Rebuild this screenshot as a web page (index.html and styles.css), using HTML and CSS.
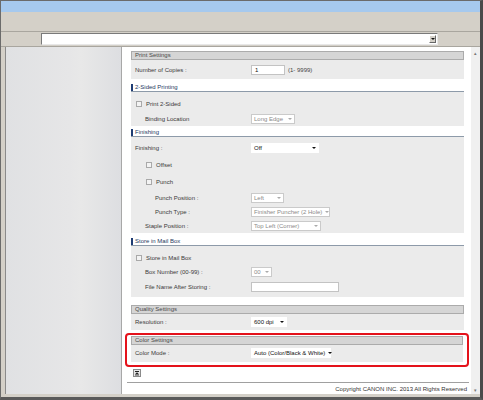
FILE: index.html
```html
<!DOCTYPE html>
<html>
<head>
<meta charset="utf-8">
<link rel="stylesheet" href="styles.css">
</head>
<body>
<div class="window">
  <div class="titlebar"></div>
  <div class="toolbar"></div>
  <div class="addressrow">
    <div class="address"><span class="addr-btn"><span class="tri-dark"></span></span></div>
  </div>
  <div class="main">
    <div class="sidebar"></div>
    <div class="content">
      <div class="sec">
        <div class="hbox">Print Settings</div>
        <div class="body b-print">
          <div class="row h15"><div class="lbl">Number of Copies :</div><div class="input w34">1</div><span class="hint">(1- 9999)</span></div>
        </div>
      </div>

      <div class="sec m5">
        <div class="hbar">2-Sided Printing</div>
        <div class="body b-duplex">
          <div class="row h15"><div class="lbl"><span class="cb"></span>Print 2-Sided</div></div>
          <div class="row h15"><div class="lbl i2">Binding Location</div><div class="sel dis w44">Long Edge<span class="tri"></span></div></div>
        </div>
      </div>

      <div class="sec m3">
        <div class="hbar">Finishing</div>
        <div class="body b-fin">
          <div class="row h16"><div class="lbl">Finishing :</div><div class="sel en w68">Off<span class="tri-dark"></span></div></div>
          <div class="row h17"><div class="lbl i2"><span class="cb"></span>Offset</div></div>
          <div class="row h17"><div class="lbl i2"><span class="cb"></span>Punch</div></div>
          <div class="row h15"><div class="lbl i3">Punch Position :</div><div class="sel dis w33">Left<span class="tri"></span></div></div>
          <div class="row h14"><div class="lbl i3">Punch Type :</div><div class="sel dis w79">Finisher Puncher (2 Hole)<span class="tri"></span></div></div>
          <div class="row h14"><div class="lbl i2">Staple Position :</div><div class="sel dis w70">Top Left (Corner)<span class="tri"></span></div></div>
        </div>
      </div>

      <div class="sec m5">
        <div class="hbar">Store in Mail Box</div>
        <div class="body b-mail">
          <div class="row h14"><div class="lbl"><span class="cb"></span>Store in Mail Box</div></div>
          <div class="row h14"><div class="lbl i2">Box Number (00-99) :</div><div class="sel dis w21">00<span class="tri"></span></div></div>
          <div class="row h15"><div class="lbl i2">File Name After Storing :</div><div class="input w87"></div></div>
        </div>
      </div>

      <div class="sec m8">
        <div class="hbox">Quality Settings</div>
        <div class="body b-q">
          <div class="row h15"><div class="lbl">Resolution :</div><div class="sel en w36">600 dpi<span class="tri-dark"></span></div></div>
        </div>
      </div>

      <div class="highlight">
        <div class="hbox">Color Settings</div>
        <div class="body b-c">
          <div class="row h16"><div class="lbl">Color Mode :</div><div class="sel en w80">Auto (Color/Black &amp; White)<span class="tri-dark"></span></div></div>
        </div>
      </div>

      <div class="toprow">
        <span class="topbtn">
          <svg width="8" height="8" viewBox="0 0 8 8">
            <rect x="0.5" y="0.5" width="7" height="7" fill="#e6e6e6" stroke="#8a8a8a"/>
            <rect x="2" y="2" width="4" height="1" fill="#222"/>
            <polygon points="4,3.3 6,5.3 2,5.3" fill="#222"/>
            <rect x="2" y="5.6" width="4" height="0.8" fill="#222"/>
          </svg>
        </span>
      </div>

      <div class="footer">Copyright CANON INC. 2013 All Rights Reserved</div>
    </div>
    <div class="scrollbar"><span class="sarrow">&#9652;</span><span class="sarrow">&#9662;</span></div>
  </div>
</div>
</body>
</html>
```

FILE: styles.css
```css
* { box-sizing: border-box; }
html, body { margin: 0; padding: 0; }
body {
  width: 483px;
  height: 400px;
  overflow: hidden;
  font-family: "Liberation Sans", Arial, sans-serif;
  font-size: 6px;
  color: #3a3a3a;
  background: #d4d0c8;
}
.window {
  width: 483px;
  height: 400px;
  border: 1px solid #6b6b6b;
  border-right: 3px solid #4a4a4a;
  border-bottom: 3px solid #5a5a5a;
  display: flex;
  flex-direction: column;
  background: #d4d0c8;
}
.titlebar { height: 11px; background: #a6c9ee; flex: none; }
.toolbar {
  height: 20px;
  flex: none;
  background: #d4d0c8;
  border-bottom: 1px solid #a9a69f;
}
.addressrow {
  height: 15px;
  flex: none;
  padding: 1px 0 0 40px;
  border-bottom: 1px solid #a9a69f;
}
.address {
  width: 397px;
  height: 12px;
  background: #fff;
  border: 1px solid #7a7a7a;
  border-right-color: #e8e8e8;
  border-bottom-color: #e8e8e8;
  display: flex;
  justify-content: flex-end;
  padding: 1px;
}
.addr-btn {
  width: 7px;
  height: 8px;
  background: #d4d0c8;
  border: 1px solid #fff;
  border-right-color: #666;
  border-bottom-color: #666;
  display: flex;
  align-items: center;
  justify-content: center;
}
.main {
  flex: 1;
  display: flex;
  padding: 0 0 3px 4px;
  min-height: 0;
}
.sidebar {
  width: 117px;
  flex: none;
  border-left: 1px solid #8a8a8a;
  border-right: 1px solid #a8a8a8;
  background: linear-gradient(to right, #e0e1e3 0%, #e6e6e7 55%, #e8e8e8 65%, #dddee1 100%);
}
.content {
  flex: 1;
  background: #fff;
  display: flex;
  flex-direction: column;
  padding: 4px 7px 0 9px;
  min-width: 0;
}
.scrollbar {
  width: 9px;
  flex: none;
  background: #f0f0f0;
  display: flex;
  flex-direction: column;
  justify-content: space-between;
  align-items: center;
  padding: 3px 0 1px;
  color: #777;
  font-size: 5px;
  line-height: 6px;
}
.sec { flex: none; }
.m3 { margin-top: 3px; }
.m5 { margin-top: 5px; }
.m8 { margin-top: 8px; }
.hbox {
  height: 9px;
  line-height: 7px;
  background: #d5d5d5;
  border: 1px solid #ababab;
  padding-left: 3px;
  color: #4a4a4a;
}
.hbar {
  height: 8px;
  line-height: 7px;
  border-bottom: 1px solid #8d9aa9;
  padding-left: 2px;
  color: #253a5e;
}
.hbar::before {
  content: "";
  display: inline-block;
  width: 2px;
  height: 7px;
  background: #1e3c74;
  vertical-align: top;
  margin: 0 2px 0 -2px;
}
.body { background: #ebebeb; }
.b-print { padding: 2px 0 2px; }
.b-duplex { padding: 4px 0 0; }
.b-fin { padding: 3px 0 0; }
.b-mail { padding: 5px 0 3px; }
.b-q { padding: 0 0 1px; }
.b-c { padding: 0 0 1px; }
.row { display: flex; align-items: center; }
.h14 { height: 14px; }
.h15 { height: 15px; }
.h16 { height: 16px; }
.h17 { height: 17px; }
.lbl {
  width: 120px;
  flex: none;
  padding-left: 4px;
  white-space: nowrap;
  display: flex;
  align-items: center;
}
.i2 { padding-left: 14px; }
.i3 { padding-left: 24px; }
.cb {
  width: 6px;
  height: 6px;
  border: 1px solid #a9a9a9;
  background: #f3f3f3;
  margin: 0 4px 0 1px;
  flex: none;
}
.input {
  height: 10px;
  background: #fff;
  border: 1px solid #c3c3c3;
  line-height: 8px;
  padding-left: 3px;
  color: #111;
}
.hint { margin-left: 3px; color: #444; }
.sel {
  height: 10px;
  line-height: 8px;
  background: #fff;
  padding: 0 2px 0 2px;
  display: flex;
  align-items: center;
  justify-content: space-between;
  white-space: nowrap;
}
.sel.dis { border: 1px solid #cacaca; color: #8a8a8a; }
.sel.en { border: 1px solid #fff; color: #111; }
.tri {
  width: 0; height: 0;
  border-left: 2px solid transparent;
  border-right: 2px solid transparent;
  border-top: 2px solid #aaa;
  margin-left: 3px;
}
.tri-dark {
  width: 0; height: 0;
  border-left: 2px solid transparent;
  border-right: 2px solid transparent;
  border-top: 2px solid #111;
  margin-left: 3px;
}
.addr-btn .tri-dark { margin-left: 0; }
.w21 { width: 21px; }
.w33 { width: 33px; }
.w34 { width: 34px; }
.w36 { width: 36px; }
.w44 { width: 44px; }
.w68 { width: 68px; }
.w70 { width: 70px; }
.w79 { width: 79px; }
.w80 { width: 80px; }
.w87 { width: 88px; }
.highlight {
  flex: none;
  margin: 3px -5px 0 -6px;
  padding: 1px 4px 3px 4px;
  border: 2px solid #e4121b;
  border-radius: 4px;
}
.toprow { flex: none; margin-top: 2px; padding-left: 2px; height: 8px; display: flex; }
.topbtn { display: block; width: 8px; height: 8px; }
.topbtn svg { display: block; }
.footer {
  flex: none;
  margin: 5px -5px 0 -4px;
  border-top: 1px solid #a0a0a0;
  text-align: right;
  padding: 2px 2px 0 0;
  line-height: 8px;
  color: #333;
}
```
